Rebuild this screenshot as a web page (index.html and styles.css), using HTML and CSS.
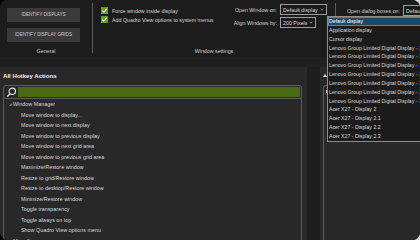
FILE: index.html
```html
<!DOCTYPE html>
<html>
<head>
<meta charset="utf-8">
<link rel="stylesheet" href="styles.css">
</head>
<body>
<div class="window">
  <div class="toolbar">
    <div class="group general">
      <div class="group-body">
        <div class="btn">Identify displays</div>
        <div class="btn">Identify display grids</div>
      </div>
      <div class="group-label">General</div>
    </div>
    <div class="sep"></div>
    <div class="group wset">
      <div class="group-body">
        <div class="checks">
          <div class="check"><span class="box"><svg viewBox="0 0 7 7" width="7" height="7"><path d="M1.4 3.6 L2.9 5.1 L5.7 1.8" fill="none" stroke="#fff" stroke-width="1.3"/></svg></span>Force window inside display</div>
          <div class="check"><span class="box"><svg viewBox="0 0 7 7" width="7" height="7"><path d="M1.4 3.6 L2.9 5.1 L5.7 1.8" fill="none" stroke="#fff" stroke-width="1.3"/></svg></span>Add Quadro View options to system menus</div>
        </div>
        <div class="fields">
          <div class="flabel">Open Window on:</div>
          <div class="select w47"><span>Default display</span><svg class="chev" viewBox="0 0 4 3" width="4" height="3"><path d="M0.5 0.7 L2 2.2 L3.5 0.7" fill="none" stroke="#ccc" stroke-width="0.7"/></svg></div>
          <div class="flabel">Align Windows by:</div>
          <div class="select w36"><span>200 Pixels</span><svg class="chev" viewBox="0 0 4 3" width="4" height="3"><path d="M0.5 0.7 L2 2.2 L3.5 0.7" fill="none" stroke="#ccc" stroke-width="0.7"/></svg></div>
        </div>
      </div>
      <div class="group-label">Window settings</div>
    </div>
    <div class="sep"></div>
    <div class="group dialog">
      <div class="dialog-row">
        <div class="flabel">Open dialog boxes on:</div>
        <div class="select w40"><span>Default display</span></div>
      </div>
    </div>
  </div>
  <div class="main">
    <div class="left">
      <div class="heading">All Hotkey Actions</div>
      <div class="search">
        <div class="search-icon"><svg viewBox="0 0 11 11" width="11" height="11"><circle cx="6.3" cy="4.3" r="3.2" fill="none" stroke="#e6e6e6" stroke-width="1.1"/><path d="M4 6.7 L1.2 9.6" stroke="#e6e6e6" stroke-width="1.3"/></svg></div>
        <div class="search-input"></div>
      </div>
      <div class="tree">
        <div class="tgroup"><svg class="tmark" viewBox="0 0 3 3" width="3" height="3"><path d="M0.3 2.7 L2.7 2.7 L2.7 0.3 Z" fill="#aaa"/></svg>Window Manager</div>
        <div class="titem">Move window to display...</div>
        <div class="titem">Move window to next display</div>
        <div class="titem">Move window to previous display</div>
        <div class="titem">Move window to next grid area</div>
        <div class="titem">Move window to previous grid area</div>
        <div class="titem">Maximize/Restore window</div>
        <div class="titem">Resize to grid/Restore window</div>
        <div class="titem">Resize to desktop/Restore window</div>
        <div class="titem">Minimize/Restore window</div>
        <div class="titem">Toggle transparency</div>
        <div class="titem">Toggle always on top</div>
        <div class="titem">Show Quadro View options menu</div>
        <div class="tgroup flat">Miscellaneous</div>
      </div>
    </div>
    <div class="gutter"></div>
    <div class="right">
      <div class="rhead"><svg viewBox="0 0 4 3" width="4" height="3"><path d="M0 3 L2 0 L4 3 Z" fill="#ddd"/></svg></div>
      <div class="rbox"><div class="rmark"></div></div>
    </div>
  </div>
  <div class="dropdown-list">
    <div class="ditem selected">Default display</div>
    <div class="ditem">Application display</div>
    <div class="ditem">Cursor display</div>
    <div class="ditem">Lenovo Group Limited Digital Display - 1</div>
    <div class="ditem">Lenovo Group Limited Digital Display - 1.1</div>
    <div class="ditem">Lenovo Group Limited Digital Display - 1.2</div>
    <div class="ditem">Lenovo Group Limited Digital Display - 1.3</div>
    <div class="ditem">Lenovo Group Limited Digital Display - 1.4</div>
    <div class="ditem">Lenovo Group Limited Digital Display - 1.5</div>
    <div class="ditem">Lenovo Group Limited Digital Display - 1.6</div>
    <div class="ditem">Acer X27 - Display 2</div>
    <div class="ditem">Acer X27 - Display 2.1</div>
    <div class="ditem">Acer X27 - Display 2.2</div>
    <div class="ditem">Acer X27 - Display 2.3</div>
  </div>
</div>
</body>
</html>
```
FILE: styles.css
```css
html, body {
  margin: 0;
  padding: 0;
}
body {
  width: 420px;
  height: 240px;
  background: linear-gradient(90deg, #000 50%, #d8d8d8 50%);
  font-family: "Liberation Sans", Arial, sans-serif;
  overflow: hidden;
}
.window {
  position: relative;
  width: 420px;
  height: 240px;
  border-radius: 8px;
  overflow: hidden;
  background: #202020;
  display: flex;
  flex-direction: column;
}
.toolbar {
  height: 57px;
  flex: none;
  display: flex;
  background: #1c1c1c;
}
.group {
  display: flex;
  flex-direction: column;
  flex: none;
}
.group-body {
  flex: 1;
}
.group-label {
  height: 12px;
  line-height: 12px;
  text-align: center;
  font-size: 5.3px;
  color: #cfcfcf;
}
.general {
  width: 92px;
}
.general .group-body {
  padding: 8px 0 0 7px;
  display: flex;
  flex-direction: column;
  gap: 6.5px;
}
.btn {
  width: 73px;
  height: 13.5px;
  background: #3a3a3a;
  color: #c8c8c8;
  font-size: 4.6px;
  text-transform: uppercase;
  display: flex;
  align-items: center;
  justify-content: center;
}
.sep {
  width: 1px;
  flex: none;
  background: #5a5a5a;
  margin: 3px 0 4px;
}
.wset {
  width: 242px;
}
.wset .group-body {
  display: flex;
  padding: 4px 8px 0 8px;
}
.checks {
  flex: 1;
  display: flex;
  flex-direction: column;
  gap: 2px;
  padding-top: 3px;
}
.check {
  display: flex;
  align-items: center;
  gap: 4px;
  height: 7px;
  font-size: 5.3px;
  color: #d4d4d4;
  white-space: nowrap;
}
.box {
  width: 7px;
  height: 7px;
  background: #5f9e1c;
  display: block;
  flex: none;
}
.box svg {
  display: block;
}
.fields {
  display: grid;
  grid-template-columns: auto auto;
  column-gap: 3px;
  row-gap: 2px;
  align-items: center;
  align-self: flex-start;
}
.flabel {
  font-size: 5.3px;
  color: #cfcfcf;
  text-align: right;
  white-space: nowrap;
}
.select {
  height: 11px;
  box-sizing: border-box;
  border: 1px solid #9c9c9c;
  background: #1a1a1a;
  color: #dadada;
  font-size: 5.3px;
  display: flex;
  align-items: center;
  justify-content: space-between;
  padding: 0 2px 0 2px;
  white-space: nowrap;
  overflow: hidden;
  flex: none;
}
.w47 { width: 47px; }
.w36 { width: 36px; justify-self: start; }
.w40 { width: 40px; }
.chev { display: block; flex: none; }
.dialog {
  flex: 1;
  padding: 5px 0 0 11px;
}
.dialog-row {
  display: flex;
  align-items: center;
  gap: 3px;
}
.main {
  flex: 1;
  display: flex;
  padding-top: 10px;
  background: #202020;
  min-height: 0;
}
.left {
  width: 307px;
  flex: none;
  box-sizing: border-box;
  padding: 0 5px 0 3px;
  background: #282828;
  display: flex;
  flex-direction: column;
}
.heading {
  height: 18px;
  line-height: 18px;
  font-size: 6.1px;
  font-weight: bold;
  color: #f0f0f0;
  flex: none;
}
.search {
  height: 14px;
  flex: none;
  box-sizing: border-box;
  border: 1px solid #5c5c5c;
  border-radius: 3px 3px 0 0;
  display: flex;
  padding: 1px 1px 1px 0;
}
.search-icon {
  width: 14px;
  flex: none;
  display: flex;
  align-items: center;
  justify-content: center;
}
.search-icon svg { display: block; }
.search-input {
  flex: 1;
  background: #4a6913;
}
.tree {
  flex: 1;
  border-left: 1px solid #5c5c5c;
  border-right: 1px solid #5c5c5c;
  color: #d6d6d6;
  font-size: 5.4px;
  line-height: 10.5px;
  white-space: nowrap;
  overflow: hidden;
}
.tgroup {
  display: flex;
  align-items: center;
  padding-left: 5px;
  gap: 1px;
  height: 10.5px;
}
.tgroup.flat {
  padding-left: 9px;
}
.tmark { display: block; flex: none; }
.titem {
  height: 10.5px;
  padding-left: 17px;
}
.gutter {
  width: 13px;
  flex: none;
  background: #1d1d1d;
}
.right {
  flex: 1;
  background: #282828;
  padding-left: 3px;
  display: flex;
  flex-direction: column;
}
.rhead {
  height: 18px;
  flex: none;
  display: flex;
  align-items: center;
}
.rhead svg { display: block; margin-top: -2px; }
.rbox {
  flex: 1;
  border-left: 1px solid #5c5c5c;
  border-top: 1px solid #5c5c5c;
  border-radius: 3px 0 0 0;
  padding: 4px 0 0 2px;
}
.rmark {
  width: 3px;
  height: 3px;
  background: #bbb;
}
.dropdown-list {
  position: absolute;
  left: 327px;
  top: 16px;
  width: 100px;
  box-sizing: border-box;
  border: 1px solid #8c8c8c;
  background: #1b1b1b;
  color: #d8d8d8;
  font-size: 5.2px;
}
.ditem {
  height: 8.85px;
  line-height: 8.85px;
  padding-left: 1px;
  white-space: nowrap;
  box-sizing: border-box;
}
.ditem.selected {
  background: #1d4866;
  border: 1px solid #4d88b4;
  line-height: 6.85px;
  padding-left: 0;
  color: #fff;
}
```
